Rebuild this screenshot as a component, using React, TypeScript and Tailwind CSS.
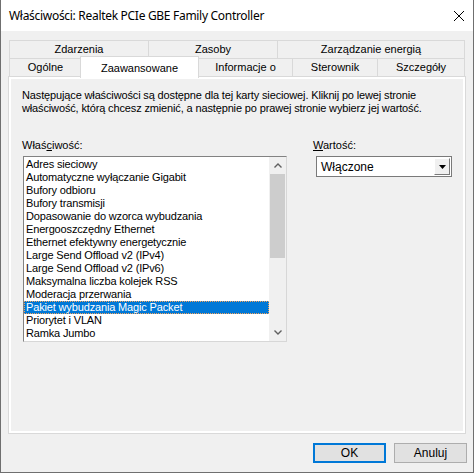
import React from "react";

const rowOne = [
  { label: "Zdarzenia", w: "w-[139px]" },
  { label: "Zasoby", w: "w-[129px]" },
  { label: "Zarządzanie energią", w: "w-[188px]" },
];

const rowTwo = [
  { label: "Ogólne", w: "w-[72px]" },
  { label: "Zaawansowane", w: "w-[117px]", active: true },
  { label: "Informacje o", w: "w-[94px]" },
  { label: "Sterownik", w: "w-[85px]" },
  { label: "Szczegóły", w: "w-[88px]" },
];

const properties = [
  "Adres sieciowy",
  "Automatyczne wyłączanie Gigabit",
  "Bufory odbioru",
  "Bufory transmisji",
  "Dopasowanie do wzorca wybudzania",
  "Energooszczędny Ethernet",
  "Ethernet efektywny energetycznie",
  "Large Send Offload v2 (IPv4)",
  "Large Send Offload v2 (IPv6)",
  "Maksymalna liczba kolejek RSS",
  "Moderacja przerwania",
  "Pakiet wybudzania Magic Packet",
  "Priorytet i VLAN",
  "Ramka Jumbo",
];
const selectedIndex = 11;

const Chevron: React.FC<{ down?: boolean }> = ({ down }) => (
  <svg width="8" height="5" viewBox="0 0 8 5" className={down ? "rotate-180" : ""}>
    <path d="M0.5 4.5 L4 1 L7.5 4.5" fill="none" stroke="#606060" strokeWidth="1.4" />
  </svg>
);

const App: React.FC = () => {
  return (
    <div className="w-[475px] h-[473px] bg-white font-['Liberation_Sans',Arial,sans-serif] text-[11px] text-black">
      <div className="w-[474px] h-[473px] flex flex-col bg-[#f0f0f0] border-l border-r border-b border-[#6f6f6f]">
        {/* title bar */}
        <div className="h-[31px] bg-white flex items-center justify-between pl-[8px] pr-[9px]">
          <span className="font-['Noto_Sans',sans-serif] text-[12px] tracking-[-0.3px] text-black">
            Właściwości: Realtek PCIe GBE Family Controller
          </span>
          <svg width="10" height="10" viewBox="0 0 10 10">
            <path d="M0 0 L10 10 M10 0 L0 10" stroke="#000" strokeWidth="1" />
          </svg>
        </div>

        {/* tabs */}
        <div className="mt-[9px] ml-[8px] w-[456px]">
          <div className="flex h-[18px]">
            {rowOne.map((t, i) => (
              <div
                key={t.label}
                className={`${t.w} flex items-center justify-center border-t border-l border-[#d9d9d9] ${
                  i === rowOne.length - 1 ? "border-r" : ""
                }`}
              >
                {t.label}
              </div>
            ))}
          </div>
          <div className="flex h-[18px] border-t border-[#d9d9d9]">
            {rowTwo.map((t, i) =>
              t.active ? (
                <div
                  key={t.label}
                  className="relative z-10 w-[119px] -mx-[1px] h-[22px] -mt-[3px] flex justify-center pt-[3px] bg-white border-t border-l border-r border-[#d9d9d9]"
                >
                  {t.label}
                </div>
              ) : (
                <div
                  key={t.label}
                  className={`${t.w} flex items-center justify-center border-l border-[#d9d9d9] ${
                    i === rowTwo.length - 1 ? "border-r" : ""
                  }`}
                >
                  {t.label}
                </div>
              )
            )}
          </div>
        </div>

        {/* tab page */}
        <div className="ml-[7px] w-[458px] h-[358px] border border-[#d9d9d9] bg-white p-[2px]">
          <div className="h-full bg-[#f0f0f0] pl-[11px] pt-[10px]">
            <p className="leading-[13px] tracking-[-0.14px]">
              Następujące właściwości są dostępne dla tej karty sieciowej. Kliknij po lewej stronie
              <br />
              właściwość, którą chcesz zmienić, a następnie po prawej stronie wybierz jej wartość.
            </p>

            <div className="flex mt-[24px]">
              <div className="flex flex-col">
                <div className="h-[13px] leading-[13px]">
                  Właś<span className="underline">c</span>iwość:
                </div>
                <div className="mt-[4px] ml-[1px] w-[264px] h-[186px] flex bg-white border border-t-[#828282] border-l-[#828282] border-r-[#d7d7d7] border-b-[#d7d7d7]">
                  <div className="flex-1 pt-[1px] tracking-[-0.15px]">
                    {properties.map((p, i) => (
                      <div
                        key={p}
                        className={`h-[13px] leading-[13px] pl-[2px] whitespace-nowrap ${
                          i === selectedIndex
                            ? "bg-[#0078d7] text-white outline-1 outline-dotted outline-[#f5a35a] -outline-offset-1"
                            : ""
                        }`}
                      >
                        {p}
                      </div>
                    ))}
                  </div>
                  <div className="w-[17px] flex flex-col bg-[#f0f0f0]">
                    <div className="h-[17px] flex items-center justify-center">
                      <Chevron />
                    </div>
                    <div className="flex-1 px-[1px]">
                      <div className="h-[84px] bg-[#cdcdcd]" />
                    </div>
                    <div className="h-[17px] flex items-center justify-center">
                      <Chevron down />
                    </div>
                  </div>
                </div>
              </div>

              <div className="ml-[26px] flex flex-col">
                <div className="h-[13px] leading-[13px]">
                  <span className="underline">W</span>artość:
                </div>
                <div className="mt-[4px] ml-[3px] w-[136px] h-[21px] flex items-center bg-white border border-[#7a7a7a]">
                  <span className="flex-1 pl-[4px] text-[12px]">Włączone</span>
                  <div className="w-[16px] h-[17px] mr-[1px] flex items-center justify-center bg-[#f0f0f0] border border-t-white border-l-white border-r-[#7a7a7a] border-b-[#7a7a7a]">
                    <svg width="7" height="4" viewBox="0 0 7 4">
                      <path d="M0 0 L7 0 L3.5 4 Z" fill="#000" />
                    </svg>
                  </div>
                </div>
              </div>
            </div>
          </div>
        </div>

        {/* buttons */}
        <div className="mt-[9px] flex justify-end gap-[8px] pr-[6px]">
          <button className="w-[73px] h-[20px] bg-[#e1e1e1] border-2 border-[#0078d7] flex items-center justify-center text-[12px]">
            OK
          </button>
          <button className="w-[73px] h-[20px] bg-[#e1e1e1] border border-[#adadad] flex items-center justify-center text-[12px]">
            Anuluj
          </button>
        </div>
      </div>
    </div>
  );
};

export default App;
